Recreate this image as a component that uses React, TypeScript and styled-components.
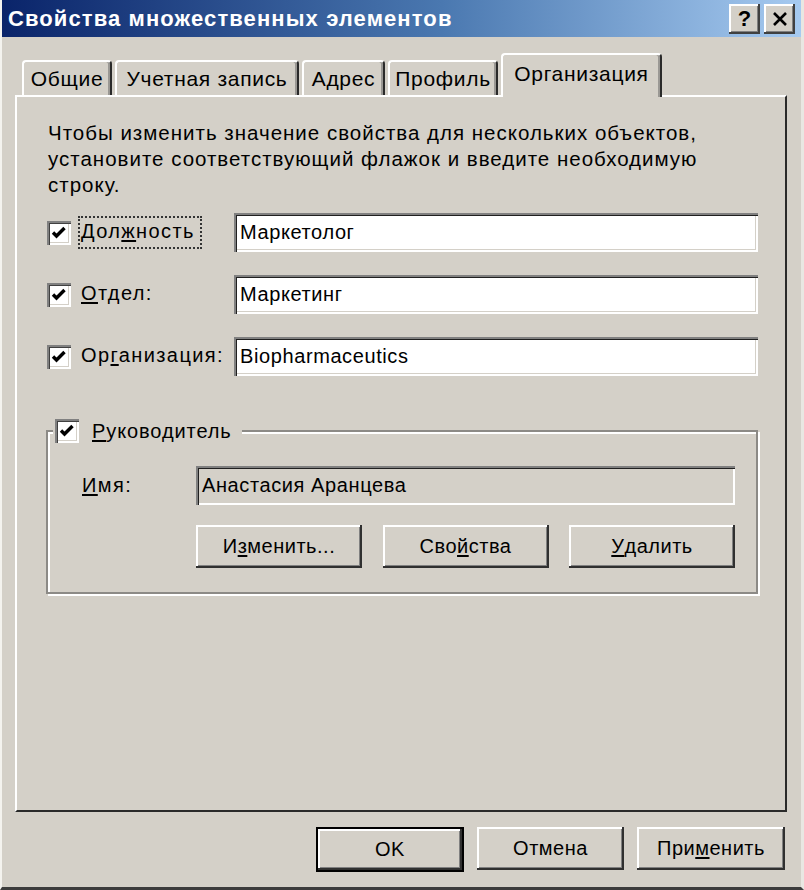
import React from "react";
import styled, { createGlobalStyle } from "styled-components";

const GlobalStyle = createGlobalStyle`
  html, body {
    margin: 0;
    padding: 0;
    background: #d4d0c8;
  }
  body {
    font-family: "Liberation Sans", Arial, sans-serif;
  }
  * {
    box-sizing: border-box;
  }
`;

const tabs = [
  { label: "Общие", width: 90 },
  { label: "Учетная запись", width: 184 },
  { label: "Адрес", width: 83 },
  { label: "Профиль", width: 110 },
  { label: "Организация", width: 161, active: true },
];

const Window = styled.div`
  width: 804px;
  height: 890px;
  display: flex;
  flex-direction: column;
  background: #d4d0c8;
  border-left: 2px solid #f4f3ef;
  border-right: 3px solid #e9e7e2;
  border-bottom: 3px solid #3c3c3c;
`;

const TitleBar = styled.div`
  height: 37px;
  flex-shrink: 0;
  display: flex;
  align-items: center;
  justify-content: space-between;
  padding: 0 6px 0 6px;
  background: linear-gradient(to right, #0a246a 0%, #4a78b0 55%, #a6caf0 100%);
`;

const TitleText = styled.span`
  color: #fff;
  font-size: 22px;
  font-weight: bold;
  letter-spacing: 1.1px;
`;

const CaptionButtons = styled.div`
  display: flex;
  gap: 4px;
`;

const CaptionButton = styled.div`
  width: 31px;
  height: 30px;
  display: flex;
  align-items: center;
  justify-content: center;
  background: #d4d0c8;
  color: #000;
  font-size: 22px;
  font-weight: bold;
  box-shadow: inset -2px -2px 0 #404040, inset 2px 2px 0 #ffffff,
    inset -3px -3px 0 #808080;
`;

const Body = styled.div`
  flex: 1;
  display: flex;
  flex-direction: column;
  padding: 16px 14px 0 13px;
`;

const TabStrip = styled.div`
  height: 42px;
  display: flex;
  align-items: flex-end;
  gap: 3px;
  padding-left: 7px;
  position: relative;
  z-index: 1;
`;

const Tab = styled.div<{ $width: number; $active?: boolean }>`
  width: ${(p) => p.$width}px;
  height: ${(p) => (p.$active ? 44 : 35)}px;
  margin-bottom: ${(p) => (p.$active ? -2 : 0)}px;
  display: flex;
  align-items: center;
  justify-content: center;
  padding-bottom: ${(p) => (p.$active ? 4 : 0)}px;
  font-size: 21px;
  letter-spacing: 0.7px;
  color: #000;
  background: #d4d0c8;
  border-radius: 4px 4px 0 0;
  border-top: 2px solid #ffffff;
  border-left: 2px solid #ffffff;
  border-right: 2px solid #2a2a2a;
  box-shadow: inset -2px 0 0 #9a9894;
`;

const Panel = styled.div`
  height: 717px;
  flex-shrink: 0;
  padding: 23px 27px 0 30px;
  border-top: 2px solid #ffffff;
  border-left: 2px solid #ffffff;
  border-right: 2px solid #2a2a2a;
  border-bottom: 2px solid #2a2a2a;
`;

const Intro = styled.p`
  margin: 0 0 15px 1px;
  font-size: 20.5px;
  line-height: 26px;
  letter-spacing: 1px;
  color: #000;
`;

const FieldRow = styled.div`
  display: flex;
  align-items: center;
  height: 39px;
  margin-bottom: 23px;
`;

const CheckBox = styled.span`
  width: 24px;
  height: 24px;
  flex-shrink: 0;
  display: inline-flex;
  align-items: center;
  justify-content: center;
  background: #fff;
  box-shadow: inset 2px 2px 0 #808080, inset 3px 3px 0 #404040,
    inset -2px -2px 0 #ffffff, inset -3px -3px 0 #d4d0c8;
`;

const RowLabel = styled.span<{ $focused?: boolean }>`
  width: 156px;
  flex-shrink: 0;
  margin-left: 7px;
  display: flex;
  align-items: center;
  font-size: 20px;
  letter-spacing: 1.4px;
  color: #000;
  white-space: nowrap;

  span.text {
    padding: 2px 5px 4px 1px;
    border: 2px dotted ${(p) => (p.$focused ? "#333" : "transparent")};
  }
`;

const TextBox = styled.div<{ $readOnly?: boolean }>`
  flex: 1;
  height: 39px;
  display: flex;
  align-items: center;
  padding: 0 6px;
  font-size: 20px;
  letter-spacing: 0.6px;
  color: #000;
  background: ${(p) => (p.$readOnly ? "#d4d0c8" : "#ffffff")};
  box-shadow: inset 2px 2px 0 #808080, inset 3px 3px 0 #202020,
    inset -2px -2px 0 #ffffff, inset -3px -3px 0 #d4d0c8;
`;

const GroupBox = styled.fieldset`
  margin: 43px 0 0 -1px;
  padding: 23px 21px 24px 0;
  border: 2px solid #8c8a86;
  box-shadow: 2px 2px 0 #ffffff, inset 2px 2px 0 #ffffff;
  min-width: 0;
`;

const Legend = styled.legend`
  margin-left: 5px;
  padding: 0 10px 0 2px;
  display: flex;
  align-items: center;
  gap: 13px;
  font-size: 20px;
  letter-spacing: 0.9px;
  background: #d4d0c8;
  color: #000;
`;

const GroupContent = styled.div`
  padding-left: 34px;
`;

const NameRow = styled.div`
  display: flex;
  align-items: center;
`;

const NameLabel = styled.span`
  width: 114px;
  flex-shrink: 0;
  font-size: 20px;
  letter-spacing: 1.4px;
  color: #000;
`;

const GroupButtons = styled.div`
  display: flex;
  justify-content: space-between;
  margin: 20px 0 0 114px;
`;

const Button = styled.div<{ $default?: boolean; $w?: number }>`
  width: ${(p) => p.$w ?? 166}px;
  height: ${(p) => (p.$default ? 45 : 43)}px;
  display: flex;
  align-items: center;
  justify-content: center;
  font-size: 20px;
  letter-spacing: 0.5px;
  color: #000;
  background: #d4d0c8;
  border: ${(p) => (p.$default ? "2px solid #000" : "none")};
  box-shadow: inset -2px -2px 0 #303030, inset 2px 2px 0 #ffffff,
    inset -3px -3px 0 #808080;
`;

const Footer = styled.div`
  display: flex;
  justify-content: flex-end;
  gap: 13px;
  padding: 15px 2px 0 0;
`;

const U = styled.span`
  text-decoration: underline;
  text-underline-offset: 2px;
`;

const Check = () => (
  <svg width="16" height="16" viewBox="0 0 16 16">
    <polyline
      points="2,7.5 5.5,11 13.5,3"
      fill="none"
      stroke="#000"
      strokeWidth="3.4"
    />
  </svg>
);

const App = () => {
  return (
    <>
      <GlobalStyle />
      <Window>
        <TitleBar>
          <TitleText>Свойства множественных элементов</TitleText>
          <CaptionButtons>
            <CaptionButton>?</CaptionButton>
            <CaptionButton>
              <svg width="16" height="14" viewBox="0 0 16 14">
                <path
                  d="M2 1 L14 13 M14 1 L2 13"
                  stroke="#000"
                  strokeWidth="2.6"
                  fill="none"
                />
              </svg>
            </CaptionButton>
          </CaptionButtons>
        </TitleBar>
        <Body>
          <TabStrip>
            {tabs.map((t) => (
              <Tab key={t.label} $width={t.width} $active={t.active}>
                {t.label}
              </Tab>
            ))}
          </TabStrip>
          <Panel>
            <Intro>
              Чтобы изменить значение свойства для нескольких объектов,
              <br />
              установите соответствующий флажок и введите необходимую
              <br />
              строку.
            </Intro>

            <FieldRow>
              <CheckBox>
                <Check />
              </CheckBox>
              <RowLabel $focused>
                <span className="text">
                  Дол<U>ж</U>ность
                </span>
              </RowLabel>
              <TextBox>Маркетолог</TextBox>
            </FieldRow>

            <FieldRow>
              <CheckBox>
                <Check />
              </CheckBox>
              <RowLabel>
                <span className="text">
                  <U>О</U>тдел:
                </span>
              </RowLabel>
              <TextBox>Маркетинг</TextBox>
            </FieldRow>

            <FieldRow>
              <CheckBox>
                <Check />
              </CheckBox>
              <RowLabel>
                <span className="text">
                  Ор<U>г</U>анизация:
                </span>
              </RowLabel>
              <TextBox>Biopharmaceutics</TextBox>
            </FieldRow>

            <GroupBox>
              <Legend>
                <CheckBox>
                  <Check />
                </CheckBox>
                <span>
                  <U>Р</U>уководитель
                </span>
              </Legend>
              <GroupContent>
                <NameRow>
                  <NameLabel>
                    <U>И</U>мя:
                  </NameLabel>
                  <TextBox $readOnly>Анастасия Аранцева</TextBox>
                </NameRow>
                <GroupButtons>
                  <Button>
                    И<U>з</U>менить...
                  </Button>
                  <Button>
                    Сво<U>й</U>ства
                  </Button>
                  <Button>
                    <U>У</U>далить
                  </Button>
                </GroupButtons>
              </GroupContent>
            </GroupBox>
          </Panel>
          <Footer>
            <Button $default $w={148}>
              OK
            </Button>
            <Button $w={147}>Отмена</Button>
            <Button $w={148}>
              При<U>м</U>енить
            </Button>
          </Footer>
        </Body>
      </Window>
    </>
  );
};

export default App;
